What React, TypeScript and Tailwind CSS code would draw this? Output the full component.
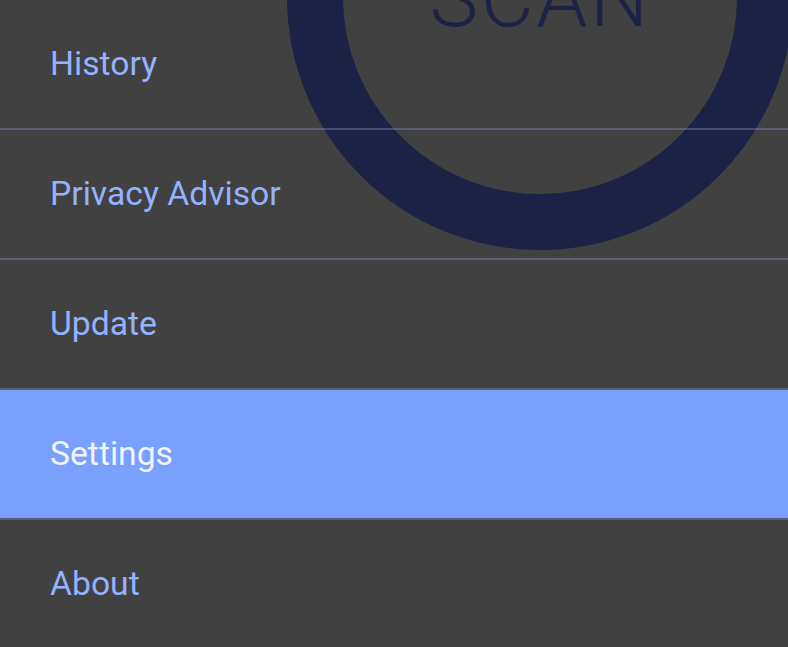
const items = ['History', 'Privacy Advisor', 'Update', 'Settings', 'About'];

export default function App() {
  return (
    <div className="relative h-[647px] w-[788px] overflow-hidden bg-[#414141] font-['Roboto',sans-serif]">
      {/* scan button sitting behind the menu */}
      <div className="absolute left-[287px] top-[-256px] flex h-[506px] w-[506px] items-end justify-center rounded-full border-[56px] border-[#1b2245]">
        <span className="mb-[155px] text-[82px] font-light leading-none tracking-[0.03em] text-[#1b2245]">SCAN</span>
      </div>

      <nav className="relative flex flex-col">
        {items.map((item) => {
          const active = item === 'Settings';
          return (
            <div key={item} className="flex flex-col">
              <div
                className={
                  active
                    ? 'flex h-[128px] items-center bg-[#7aa0fd] pl-[50px] text-[33.7px] text-[#f0f4ff]'
                    : 'flex h-[128px] items-center pl-[50px] text-[33.7px] text-[#94b2ff]'
                }
              >
                {item}
              </div>
              <div className="h-[2px] bg-[rgba(140,140,210,0.38)]" />
            </div>
          );
        })}
      </nav>
    </div>
  );
}
